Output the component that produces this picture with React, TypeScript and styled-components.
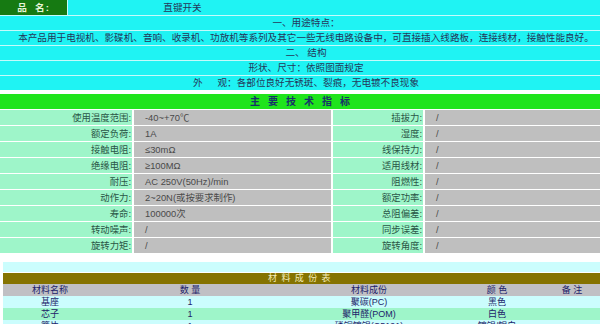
import React from "react";
import styled, { createGlobalStyle } from "styled-components";

const GlobalStyle = createGlobalStyle`
  html, body { margin: 0; padding: 0; background: #ffffff; }
  body {
    font-family: "Liberation Sans", "Noto Sans CJK SC", sans-serif;
    font-size: 9.4px;
  }
`;

const Page = styled.div`
  width: 600px;
  height: 324px;
  overflow: hidden;
  background: #ffffff;
`;

const TopTable = styled.div`
  display: flex;
  flex-direction: column;
  gap: 1px;
  background: #c4fbfb;
`;

const NameRow = styled.div`
  display: grid;
  grid-template-columns: 68px 229px 1fr;
  height: 15px;
`;

const NameLabel = styled.div`
  background: #167a12;
  color: #e6f5d8;
  font-weight: bold;
  font-size: 9.6px;
  line-height: 15px;
  text-align: center;
  letter-spacing: 1px;
  border-right: 1px solid #c4fbfb;
  white-space: pre;
`;

const CyanCell = styled.div<{ $center?: boolean }>`
  background: #1ff3f3;
  color: #24375a;
  font-size: 9.6px;
  line-height: 15px;
  text-align: ${(p) => (p.$center ? "center" : "left")};
  white-space: pre;
`;

const InfoRow = styled.div`
  background: #1ff3f3;
  color: #24375a;
  height: 14px;
  font-size: 9.6px;
  line-height: 14px;
  text-align: center;
  padding-left: 12px;
  white-space: pre;
`;

const SectionBar = styled.div`
  margin-top: 4px;
  height: 15px;
  line-height: 15px;
  background: #1fe41c;
  color: #17326a;
  font-weight: bold;
  font-size: 10px;
  text-align: center;
  letter-spacing: 8px;
  padding-left: 8px;
`;

const SpecGrid = styled.div`
  margin-top: 1px;
  display: grid;
  grid-template-columns: 132px 197px 90px 1fr;
  grid-auto-rows: 15px;
  column-gap: 2px;
  row-gap: 1px;
  background: #ffffff;
`;

const SpecLabel = styled.div`
  background: #9ef5c9;
  color: #2a5646;
  text-align: right;
  padding-right: 1px;
  line-height: 15px;
  white-space: nowrap;
`;

const SpecValue = styled.div`
  background: #bfbfbf;
  color: #4a4a4a;
  padding-left: 11px;
  line-height: 15px;
  white-space: nowrap;
`;

const MaterialTable = styled.div`
  margin-top: 9px;
  margin-left: 3px;
  width: 620px;
  display: flex;
  flex-direction: column;
`;

const PaleStrip = styled.div`
  height: 10px;
  background: #cbfdfd;
`;

const TitleBar = styled.div`
  margin-top: 1px;
  height: 11px;
  line-height: 11px;
  background: #857300;
  color: #f3ecb8;
  font-size: 9px;
  text-align: left;
  padding-left: 265px;
  letter-spacing: 4.4px;
  white-space: pre;
`;

const MatRow = styled.div<{ $bg: string }>`
  display: grid;
  grid-template-columns: 94px 186px 172px 84px 66px 1fr;
  height: 12px;
  line-height: 12px;
  background: ${(p) => p.$bg};
  color: #1d1d6a;
  font-size: 9px;
`;

const MatCell = styled.div`
  text-align: center;
  white-space: pre;
`;

const specRows: [string, string, string, string][] = [
  ["使用温度范围:", "-40~+70℃", "插拔力:", "/"],
  ["额定负荷:", "1A", "湿度:", "/"],
  ["接触电阻:", "≤30mΩ", "线保持力:", "/"],
  ["绝缘电阻:", "≥100MΩ", "适用线材:", "/"],
  ["耐压:", "AC 250V(50Hz)/min", "阻燃性:", "/"],
  ["动作力:", "2~20N(或按要求制作)", "额定功率:", "/"],
  ["寿命:", "100000次", "总阻偏差:", "/"],
  ["转动噪声:", "/", "同步误差:", "/"],
  ["旋转力矩:", "/", "旋转角度:", "/"],
];

const materials: { bg: string; cells: string[] }[] = [
  { bg: "#c0c0c4", cells: ["材料名称", "数 量", "材料成份", "颜 色", "备 注", ""] },
  { bg: "#cbfdfd", cells: ["基座", "1", "聚碳(PC)", "黑色", "", ""] },
  { bg: "#9ef5c9", cells: ["芯子", "1", "聚甲醛(POM)", "白色", "", ""] },
  { bg: "#cbfdfd", cells: ["簧片", "1", "磷铜镀锡(C5191)", "镀锡/银白", "", ""] },
];

export default function App() {
  return (
    <>
      <GlobalStyle />
      <Page>
        <TopTable>
          <NameRow>
            <NameLabel>{"品  名:"}</NameLabel>
            <CyanCell $center>直键开关</CyanCell>
            <CyanCell />
          </NameRow>
          <InfoRow>一、用途特点：</InfoRow>
          <InfoRow>
            本产品用于电视机、影碟机、音响、收录机、功放机等系列及其它一些无线电路设备中，可直接插入线路板，连接线材，接触性能良好。
          </InfoRow>
          <InfoRow>{"二、 结构"}</InfoRow>
          <InfoRow>形状、尺寸：依照图面规定</InfoRow>
          <InfoRow>{"外　  观：各部位良好无锈斑、裂痕，无电镀不良现象"}</InfoRow>
        </TopTable>
        <SectionBar>主要技术指标</SectionBar>
        <SpecGrid>
          {specRows.map((r, i) => (
            <React.Fragment key={i}>
              <SpecLabel>{r[0]}</SpecLabel>
              <SpecValue>{r[1]}</SpecValue>
              <SpecLabel>{r[2]}</SpecLabel>
              <SpecValue>{r[3]}</SpecValue>
            </React.Fragment>
          ))}
        </SpecGrid>
        <MaterialTable>
          <PaleStrip />
          <TitleBar>材料成份表</TitleBar>
          {materials.map((m, i) => (
            <MatRow key={i} $bg={m.bg}>
              {m.cells.map((c, j) => (
                <MatCell key={j}>{c}</MatCell>
              ))}
            </MatRow>
          ))}
        </MaterialTable>
      </Page>
    </>
  );
}
